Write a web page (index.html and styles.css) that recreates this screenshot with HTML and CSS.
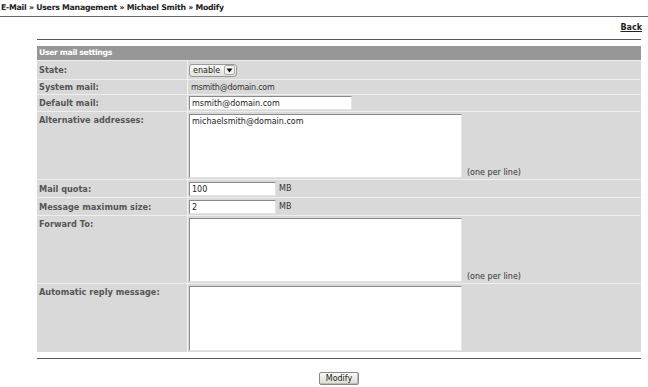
FILE: index.html
```html
<!DOCTYPE html>
<html>
<head>
<meta charset="utf-8">
<link rel="stylesheet" href="styles.css">
</head>
<body>
<div class="crumbs">E-Mail » Users Management » Michael Smith » Modify</div>
<div class="rule-top"></div>
<div class="back-row"><a class="back" href="#">Back</a></div>
<div class="content">
  <div class="rule"></div>
  <table class="form">
    <tr class="head"><th colspan="2">User mail settings</th></tr>
    <tr class="r-state">
      <td class="lbl">State:</td>
      <td class="val"><span class="sel"><span class="sel-text">enable</span><span class="sel-btn"><svg width="7" height="5" viewBox="0 0 7 5"><path d="M0.5 0.5h6L3.5 4.5z" fill="#111"/></svg></span></span></td>
    </tr>
    <tr class="r-sys">
      <td class="lbl">System mail:</td>
      <td class="val"><span class="plain">msmith@domain.com</span></td>
    </tr>
    <tr class="r-def">
      <td class="lbl">Default mail:</td>
      <td class="val"><span class="inp w-long">msmith@domain.com</span></td>
    </tr>
    <tr class="r-alt">
      <td class="lbl top">Alternative addresses:</td>
      <td class="val"><div class="line"><span class="ta">michaelsmith@domain.com</span><span class="hint">(one per line)</span></div></td>
    </tr>
    <tr class="r-quota">
      <td class="lbl">Mail quota:</td>
      <td class="val"><span class="inp w-short">100</span><span class="unit">MB</span></td>
    </tr>
    <tr class="r-max">
      <td class="lbl">Message maximum size:</td>
      <td class="val"><span class="inp w-short">2</span><span class="unit">MB</span></td>
    </tr>
    <tr class="r-fwd">
      <td class="lbl top">Forward To:</td>
      <td class="val"><div class="line"><span class="ta"></span><span class="hint">(one per line)</span></div></td>
    </tr>
    <tr class="r-auto">
      <td class="lbl top">Automatic reply message:</td>
      <td class="val"><div class="line"><span class="ta"></span></div></td>
    </tr>
  </table>
  <div class="rule bottom"></div>
  <div class="actions"><span class="btn">Modify</span></div>
</div>
</body>
</html>
```
FILE: styles.css
```css
html, body {
  margin: 0;
  padding: 0;
  background: #fff;
  font-family: "DejaVu Sans", Verdana, sans-serif;
  font-size: 8px;
  color: #222;
}
.crumbs {
  font-weight: bold;
  font-size: 7.8px;
  letter-spacing: -0.25px;
  padding: 3px 0 0 1px;
  height: 9px;
  line-height: 9px;
  color: #222;
}
.rule-top {
  margin-top: 4px;
  border-top: 1px solid #666;
}
.back-row {
  display: flex;
  justify-content: flex-end;
  padding: 6px 6px 0 0;
  height: 11px;
}
.back {
  font-weight: bold;
  color: #222;
  text-decoration: underline;
  line-height: 10px;
}
.content {
  margin: 0 7px 0 37px;
}
.rule {
  margin-top: 5px;
  border-top: 1px solid #555;
}
.form {
  width: 100%;
  margin-top: 6px;
  border-collapse: collapse;
}
.form th {
  background: #979797;
  color: #fff;
  font-weight: bold;
  font-size: 7.8px;
  letter-spacing: -0.4px;
  text-align: left;
  height: 14px;
  padding: 0 2px;
  line-height: 14px;
}
.form td {
  background: #d9d9d9;
  border-top: 1px solid #eeeeee;
  padding: 0;
  vertical-align: middle;
}
.form td.lbl {
  width: 146px;
  padding: 0 2px;
  font-weight: bold;
  font-size: 8.2px;
  color: #555;
  border-right: 1px solid #f2f2f2;
}
.form td.lbl.top {
  vertical-align: top;
  padding-top: 3px;
}
.form td.val {
  padding-left: 1px;
  color: #333;
}
.plain {
  padding-left: 2px;
  letter-spacing: -0.25px;
}
.r-state td { height: 18px; }
.r-sys td { height: 14px; }
.r-def td { height: 16px; }
.r-quota td { height: 17px; }
.r-max td { height: 17px; }
.sel {
  display: inline-flex;
  align-items: center;
  height: 11px;
  border: 1px solid #999;
  border-radius: 3px;
  background: linear-gradient(#fbfbf6, #e2e2da);
  padding-left: 3px;
  vertical-align: middle;
}
.sel-text {
  line-height: 11px;
  color: #222;
  margin-right: 4px;
}
.sel-btn {
  display: inline-flex;
  align-items: center;
  justify-content: center;
  width: 9px;
  height: 8px;
  border: 1px solid #aaa;
  border-radius: 2px;
  margin-right: 1px;
  background: #f4f4f0;
}
.inp {
  display: inline-block;
  box-sizing: border-box;
  height: 14px;
  line-height: 11px;
  background: #fff;
  border-top: 1px solid #8a8a8a;
  border-left: 1px solid #8a8a8a;
  border-right: 1px solid #e4e4e4;
  border-bottom: 1px solid #e4e4e4;
  padding: 1px 2px;
  color: #222;
  vertical-align: middle;
}
.w-long { width: 163px; }
.w-short { width: 87px; }
.unit {
  margin-left: 3px;
  vertical-align: middle;
  color: #333;
}
.line {
  display: flex;
  align-items: flex-end;
  padding: 2px 0 1px;
}
.ta {
  display: block;
  box-sizing: border-box;
  width: 273px;
  height: 64px;
  background: #fff;
  border-top: 1px solid #8a8a8a;
  border-left: 1px solid #8a8a8a;
  border-right: 1px solid #e4e4e4;
  border-bottom: 1px solid #e4e4e4;
  padding: 2px 2px;
  line-height: 10px;
  color: #222;
}
.r-auto .ta { height: 65px; }
.hint {
  margin-left: 5px;
  line-height: 10px;
  color: #333;
}
.rule.bottom {
  margin-top: 6px;
}
.actions {
  display: flex;
  justify-content: center;
  padding-top: 13px;
}
.btn {
  display: inline-block;
  height: 11px;
  line-height: 11px;
  padding: 0 6px;
  border: 1px solid #888;
  border-radius: 2px;
  background: linear-gradient(#fbfbf6, #dcdcd2);
  color: #222;
  box-shadow: inset -1px -1px 0 #bbb;
}
```
